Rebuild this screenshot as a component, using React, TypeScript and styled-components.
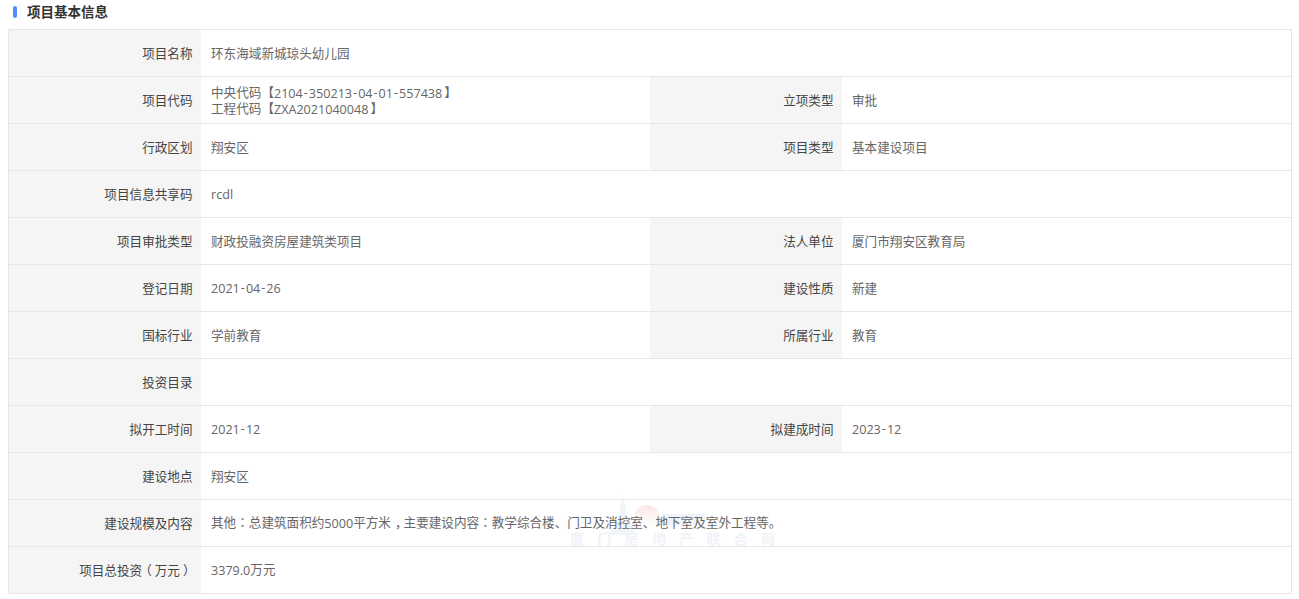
import React from "react";
import styled, { createGlobalStyle } from "styled-components";

const rows: { label: string; value: string; label2?: string; value2?: string }[] = [
  { label: "项目名称", value: "环东海域新城琼头幼儿园" },
  {
    label: "项目代码",
    value: "中央代码【2104-350213-04-01-557438】\n工程代码【ZXA2021040048】",
    label2: "立项类型",
    value2: "审批",
  },
  { label: "行政区划", value: "翔安区", label2: "项目类型", value2: "基本建设项目" },
  { label: "项目信息共享码", value: "rcdl" },
  { label: "项目审批类型", value: "财政投融资房屋建筑类项目", label2: "法人单位", value2: "厦门市翔安区教育局" },
  { label: "登记日期", value: "2021-04-26", label2: "建设性质", value2: "新建" },
  { label: "国标行业", value: "学前教育", label2: "所属行业", value2: "教育" },
  { label: "投资目录", value: "" },
  { label: "拟开工时间", value: "2021-12", label2: "拟建成时间", value2: "2023-12" },
  { label: "建设地点", value: "翔安区" },
  { label: "建设规模及内容", value: "其他：总建筑面积约5000平方米，主要建设内容：教学综合楼、门卫及消控室、地下室及室外工程等。" },
  { label: "项目总投资（万元）", value: "3379.0万元" },
];

const shifts: Record<string, number> = { "，": 4, "（": -3, "）": 3, "】": 2 };

// latin runs use another font, and the punctuation sits centred in its box in the original
const Mixed = ({ text }: { text: string }) => {
  const lines = text.split("\n");
  return (
    <>
      {lines.map((line) => (
        <Line key={line} $stacked={lines.length > 1}>
          {line.split(/([0-9A-Za-z.]+|-|：|，|（|）|】)/).map((part, i) => {
            if (part === "-") return <Hyphen key={i}>-</Hyphen>;
            if (part === "：") return <Colon key={i}>{part}</Colon>;
            if (part in shifts) return <Shifted key={i} style={{ transform: `translateX(${shifts[part]}px)` }}>{part}</Shifted>;
            if (/^[0-9A-Za-z.]+$/.test(part)) return <Latin key={i}>{part}</Latin>;
            return part;
          })}
        </Line>
      ))}
    </>
  );
};

export default function App() {
  return (
    <Page>
      <GlobalStyle />
      <Heading>
        <HeadingBar />
        项目基本信息
      </Heading>
      <Table>
        {rows.map((row) => (
          <Row key={row.label}>
            <Label>
              <span>
                <Mixed text={row.label} />
              </span>
            </Label>
            <Value $wide={!row.label2}>
              <span>
                <Mixed text={row.value} />
              </span>
            </Value>
            {row.label2 && (
              <>
                <Label>
                  <span>{row.label2}</span>
                </Label>
                <Value>
                  <span>
                    <Mixed text={row.value2 ?? ""} />
                  </span>
                </Value>
              </>
            )}
          </Row>
        ))}
        <Watermark aria-hidden="true">
          <svg width="220" height="60" viewBox="0 0 220 60">
            <defs>
              <linearGradient id="sun" x1="0" y1="0" x2="0" y2="1">
                <stop offset="0" stopColor="#fde6e6" />
                <stop offset="0.8" stopColor="#ffffff" />
              </linearGradient>
            </defs>
            <path d="M55 0 L59 22 L68 42 L42 42 L51 22 Z" fill="#f1f5fa" />
            <circle cx="79" cy="25" r="13" fill="url(#sun)" />
            <rect x="93" y="21" width="44" height="11" rx="4" fill="#eef4fa" />
          </svg>
          <WatermarkText>厦门房地产联合网</WatermarkText>
        </Watermark>
      </Table>
    </Page>
  );
}

const GlobalStyle = createGlobalStyle`
  html, body {
    margin: 0;
    background: #fff;
  }
  body {
    font-family: "Noto Sans CJK SC", sans-serif;
    font-size: 12.6px;
  }
`;

const Page = styled.div`
  padding: 0 7px 0 8px;
  height: 599px;
  overflow: hidden;
  box-sizing: border-box;
`;

const Heading = styled.div`
  display: flex;
  align-items: center;
  height: 29px;
  padding: 0 0 8px 5px;
  box-sizing: border-box;
  font-size: 13.5px;
  font-weight: 700;
  color: #333;
`;

const HeadingBar = styled.span`
  width: 4px;
  height: 12px;
  margin: 3px 10px 0 0;
  border-radius: 2px;
  background: #4d90fe;
`;

const Table = styled.div`
  position: relative;
  isolation: isolate;
  border: 1px solid #e6e6e6;
  border-bottom: 0;
`;

const Row = styled.div`
  display: grid;
  grid-template-columns: 192px 449px 192px 449px;
  height: 47px;
  box-sizing: border-box;
  border-bottom: 1px solid #e6e6e6;
`;

const Label = styled.div`
  display: flex;
  align-items: center;
  justify-content: flex-end;
  padding: 0 8.5px 1px 0;
  background: #f5f5f5;
  color: #444;
  line-height: 16px;
`;

const Value = styled.div<{ $wide?: boolean }>`
  display: flex;
  align-items: center;
  padding: 0 0 1px 10px;
  color: #666;
  line-height: 16px;
  ${(props) => props.$wide && `grid-column: 2 / 5;`}
`;

const Line = styled.span<{ $stacked: boolean }>`
  display: block;
  ${(props) => props.$stacked && `height: 16px;`}
`;

const Latin = styled.span`
  font-family: "Open Sans", sans-serif;
  vertical-align: -0.6px;
`;

const Hyphen = styled(Latin)`
  padding: 0 1px;
`;

const Colon = styled.span`
  font-family: "Noto Sans CJK TC", sans-serif;
`;

const Shifted = styled.span`
  display: inline-block;
`;

const Watermark = styled.div`
  position: absolute;
  left: 559px;
  top: 463px;
  width: 220px;
  height: 60px;
  z-index: -1;
`;

const WatermarkText = styled.div`
  position: absolute;
  left: 2px;
  top: 36px;
  font-size: 14px;
  line-height: 18px;
  font-weight: 700;
  letter-spacing: 13.3px;
  color: #eff3f8;
  white-space: nowrap;
`;
